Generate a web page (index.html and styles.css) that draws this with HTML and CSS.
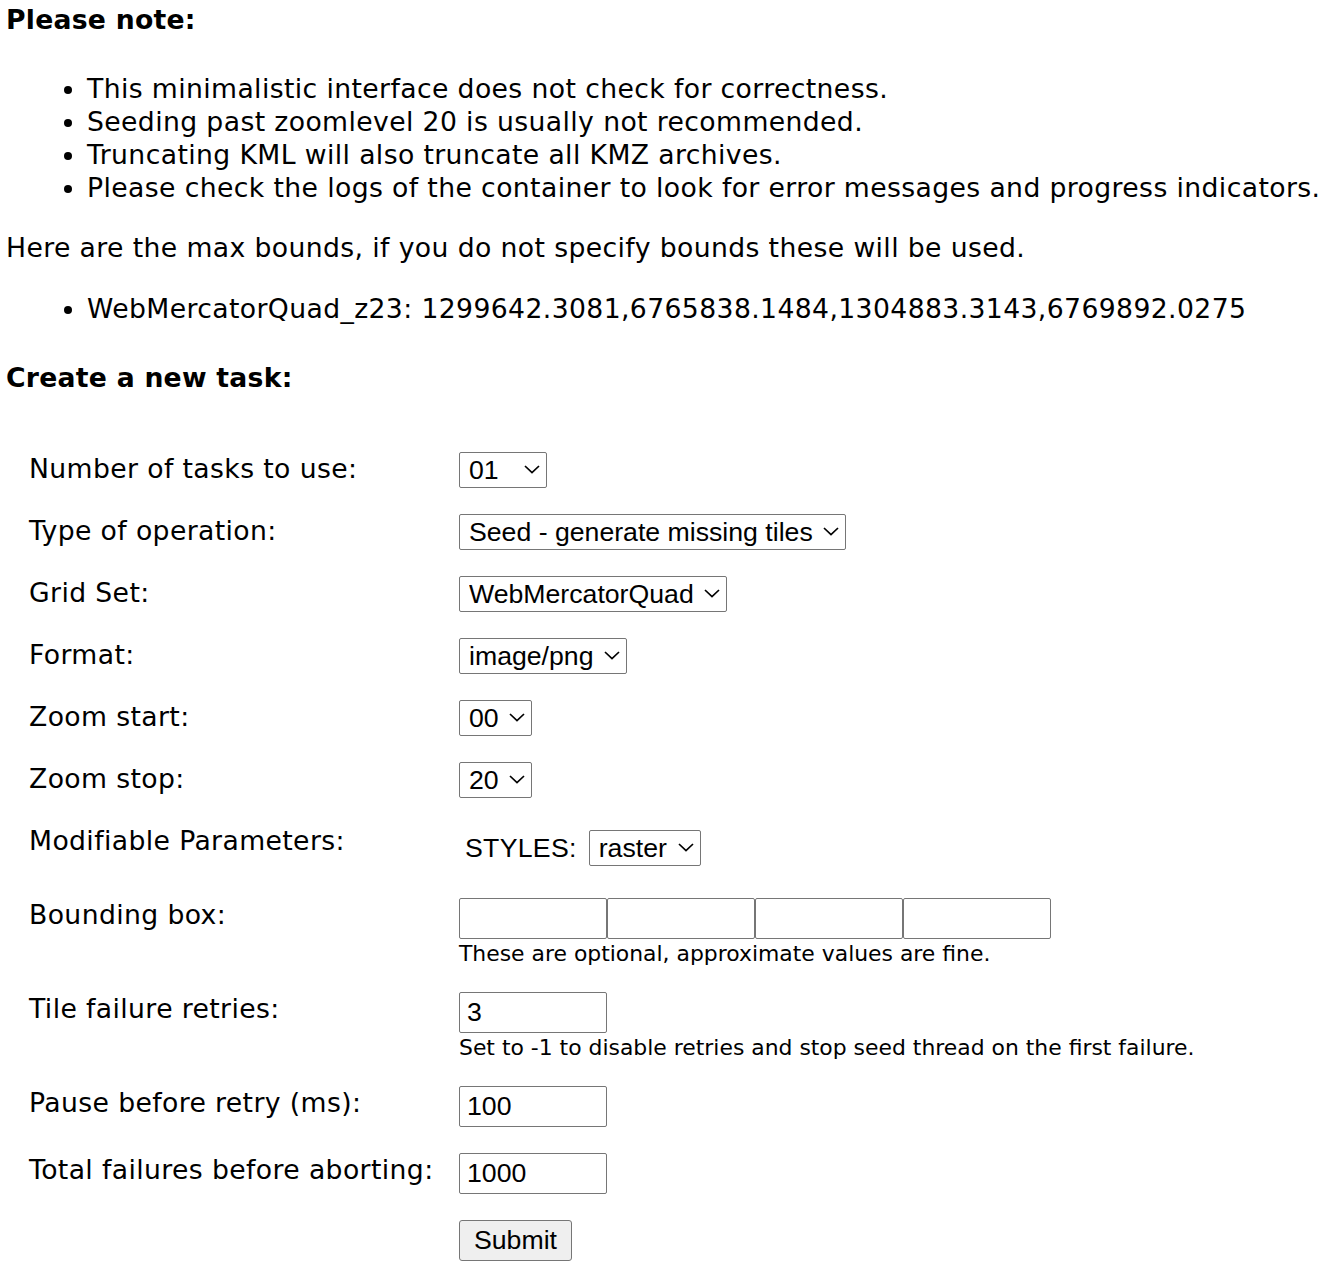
FILE: index.html
```html
<!DOCTYPE html>
<html lang="en">
<head>
<meta charset="utf-8">
<title>Seed task</title>
<link rel="stylesheet" href="styles.css">
</head>
<body>
<main class="page">
  <p class="heading">Please note:</p>
  <ul class="notes">
    <li>This minimalistic interface does not check for correctness.</li>
    <li>Seeding past zoomlevel 20 is usually not recommended.</li>
    <li>Truncating KML will also truncate all KMZ archives.</li>
    <li>Please check the logs of the container to look for error messages and progress indicators.</li>
  </ul>
  <p class="bounds-intro">Here are the max bounds, if you do not specify bounds these will be used.</p>
  <ul class="bounds">
    <li>WebMercatorQuad_z23: 1299642.3081,6765838.1484,1304883.3143,6769892.0275</li>
  </ul>
  <p class="heading task-title">Create a new task:</p>

  <form class="seed-form">
    <div class="row">
      <div class="label">Number of tasks to use:</div>
      <div class="value">
        <span class="select-wrap">
          <select class="sel w-threads"><option>01</option><option>02</option><option>04</option></select>
          <svg class="chev" viewBox="0 0 16 9" width="16" height="9"><polyline points="1,1 8,7.6 15,1"/></svg>
        </span>
      </div>
    </div>
    <div class="row">
      <div class="label">Type of operation:</div>
      <div class="value">
        <span class="select-wrap">
          <select class="sel w-type"><option>Seed - generate missing tiles</option><option>Reseed - regenerate all tiles</option><option>Truncate - remove tiles</option></select>
          <svg class="chev" viewBox="0 0 16 9" width="16" height="9"><polyline points="1,1 8,7.6 15,1"/></svg>
        </span>
      </div>
    </div>
    <div class="row">
      <div class="label">Grid Set:</div>
      <div class="value">
        <span class="select-wrap">
          <select class="sel w-grid"><option>WebMercatorQuad</option></select>
          <svg class="chev" viewBox="0 0 16 9" width="16" height="9"><polyline points="1,1 8,7.6 15,1"/></svg>
        </span>
      </div>
    </div>
    <div class="row">
      <div class="label">Format:</div>
      <div class="value">
        <span class="select-wrap">
          <select class="sel w-format"><option>image/png</option><option>image/jpeg</option></select>
          <svg class="chev" viewBox="0 0 16 9" width="16" height="9"><polyline points="1,1 8,7.6 15,1"/></svg>
        </span>
      </div>
    </div>
    <div class="row">
      <div class="label">Zoom start:</div>
      <div class="value">
        <span class="select-wrap">
          <select class="sel w-zoom"><option>00</option><option>01</option><option>02</option></select>
          <svg class="chev" viewBox="0 0 16 9" width="16" height="9"><polyline points="1,1 8,7.6 15,1"/></svg>
        </span>
      </div>
    </div>
    <div class="row">
      <div class="label">Zoom stop:</div>
      <div class="value">
        <span class="select-wrap">
          <select class="sel w-zoom"><option>20</option><option>21</option><option>22</option></select>
          <svg class="chev" viewBox="0 0 16 9" width="16" height="9"><polyline points="1,1 8,7.6 15,1"/></svg>
        </span>
      </div>
    </div>
    <div class="row">
      <div class="label">Modifiable Parameters:</div>
      <div class="value params">
        <span class="param-name">STYLES:</span>
        <span class="select-wrap">
          <select class="sel w-raster"><option>raster</option></select>
          <svg class="chev" viewBox="0 0 16 9" width="16" height="9"><polyline points="1,1 8,7.6 15,1"/></svg>
        </span>
      </div>
    </div>
    <div class="row">
      <div class="label">Bounding box:</div>
      <div class="value stack">
        <div class="bbox">
          <input class="txt" type="text" aria-label="minx">
          <input class="txt" type="text" aria-label="miny">
          <input class="txt" type="text" aria-label="maxx">
          <input class="txt" type="text" aria-label="maxy">
        </div>
        <div class="help">These are optional, approximate values are fine.</div>
      </div>
    </div>
    <div class="row">
      <div class="label">Tile failure retries:</div>
      <div class="value stack">
        <input class="txt" type="text" value="3">
        <div class="help">Set to -1 to disable retries and stop seed thread on the first failure.</div>
      </div>
    </div>
    <div class="row">
      <div class="label">Pause before retry (ms):</div>
      <div class="value"><input class="txt" type="text" value="100"></div>
    </div>
    <div class="row">
      <div class="label">Total failures before aborting:</div>
      <div class="value"><input class="txt" type="text" value="1000"></div>
    </div>
    <div class="row">
      <div class="label"></div>
      <div class="value"><button class="submit" type="button">Submit</button></div>
    </div>
  </form>
</main>
</body>
</html>
```
FILE: styles.css
```css
html, body {
  margin: 0;
  padding: 0;
  background: #ffffff;
}

body {
  color: #000000;
  font-family: "DejaVu Sans", Verdana, sans-serif;
  font-size: 26.67px;
  line-height: 33px;
  letter-spacing: 0.38px;
}

.page {
  padding: 3px 5px 0 6px;
}

.heading {
  margin: 0;
  font-weight: bold;
  letter-spacing: 0.25px;
}

.notes {
  margin: 36px 0 27px 0;
  padding-left: 81px;
}

.bounds-intro {
  margin: 0 0 28px 0;
}

.bounds {
  margin: 0 0 36px 0;
  padding-left: 81px;
}

.task-title {
  margin-bottom: 58px;
}

.seed-form {
  display: flex;
  flex-direction: column;
  gap: 26px;
  padding-left: 23px;
}

.row {
  display: flex;
  align-items: flex-start;
}

.label {
  width: 430px;
  flex: none;
}

.value {
  display: flex;
  align-items: flex-start;
  letter-spacing: 0;
}

.stack {
  flex-direction: column;
}

.params {
  align-items: center;
  padding: 6px 0 6px 6px;
  gap: 12px;
}

.param-name {
  font-family: "Liberation Sans", Arial, sans-serif;
  font-size: 26.67px;
  letter-spacing: 0.3px;
}

.select-wrap {
  position: relative;
  display: inline-block;
  line-height: 0;
}

.sel {
  -webkit-appearance: none;
  appearance: none;
  box-sizing: border-box;
  height: 36px;
  margin: 0;
  padding: 0 30px 0 9px;
  border: 1px solid #767676;
  border-radius: 2px;
  background: #ffffff;
  color: #000000;
  font-family: "Liberation Sans", Arial, sans-serif;
  font-size: 26.67px;
  line-height: 34px;
}

.chev {
  position: absolute;
  right: 7px;
  top: 13px;
  pointer-events: none;
}

.chev polyline {
  fill: none;
  stroke: #000000;
  stroke-width: 1.7;
}

.w-threads { width: 88px; }
.w-type { width: 387px; }
.w-grid { width: 268px; }
.w-format { width: 168px; }
.w-zoom { width: 73px; }
.w-raster { width: 112px; }

.bbox {
  display: flex;
}

.txt {
  box-sizing: border-box;
  width: 148px;
  height: 41px;
  margin: 0;
  padding: 0 7px;
  border: 1px solid #767676;
  border-radius: 2px;
  background: #ffffff;
  color: #000000;
  font-family: "Liberation Sans", Arial, sans-serif;
  font-size: 26.67px;
}

.help {
  font-size: 21.9px;
  line-height: 25px;
  padding-top: 2px;
  letter-spacing: 0;
}

.submit {
  box-sizing: border-box;
  width: 113px;
  height: 41px;
  margin: 0;
  padding: 0;
  border: 1px solid #767676;
  border-radius: 3px;
  background: #efefef;
  color: #000000;
  font-family: "Liberation Sans", Arial, sans-serif;
  font-size: 26.67px;
}
```
